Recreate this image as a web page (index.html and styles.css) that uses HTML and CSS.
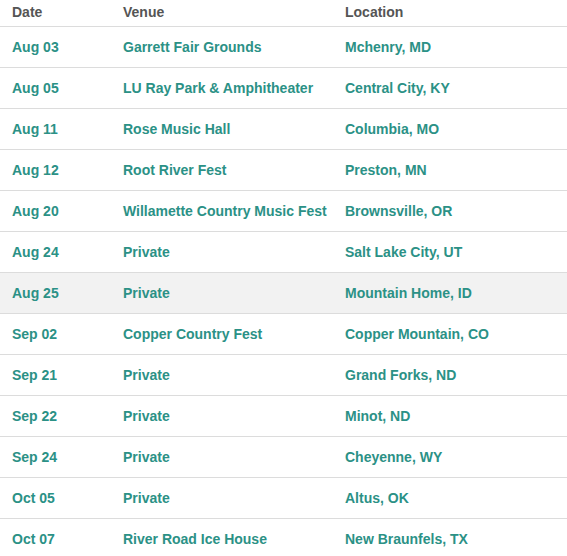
FILE: index.html
```html
<!DOCTYPE html>
<html>
<head>
<meta charset="utf-8">
<link rel="stylesheet" href="styles.css">
</head>
<body>
<table class="tour">
  <thead>
    <tr><th class="c-date">Date</th><th class="c-venue">Venue</th><th class="c-loc">Location</th></tr>
  </thead>
  <tbody>
    <tr><td>Aug 03</td><td>Garrett Fair Grounds</td><td>Mchenry, MD</td></tr>
    <tr><td>Aug 05</td><td>LU Ray Park &amp; Amphitheater</td><td>Central City, KY</td></tr>
    <tr><td>Aug 11</td><td>Rose Music Hall</td><td>Columbia, MO</td></tr>
    <tr><td>Aug 12</td><td>Root River Fest</td><td>Preston, MN</td></tr>
    <tr><td>Aug 20</td><td>Willamette Country Music Fest</td><td>Brownsville, OR</td></tr>
    <tr><td>Aug 24</td><td>Private</td><td>Salt Lake City, UT</td></tr>
    <tr class="hover"><td>Aug 25</td><td>Private</td><td>Mountain Home, ID</td></tr>
    <tr><td>Sep 02</td><td>Copper Country Fest</td><td>Copper Mountain, CO</td></tr>
    <tr><td>Sep 21</td><td>Private</td><td>Grand Forks, ND</td></tr>
    <tr><td>Sep 22</td><td>Private</td><td>Minot, ND</td></tr>
    <tr><td>Sep 24</td><td>Private</td><td>Cheyenne, WY</td></tr>
    <tr><td>Oct 05</td><td>Private</td><td>Altus, OK</td></tr>
    <tr><td>Oct 07</td><td>River Road Ice House</td><td>New Braunfels, TX</td></tr>
  </tbody>
</table>
</body>
</html>
```
FILE: styles.css
```css
html, body {
  margin: 0;
  padding: 0;
  background: #ffffff;
}
body {
  font-family: "Liberation Sans", Arial, sans-serif;
  font-size: 14px;
  font-weight: bold;
}
.tour {
  width: 100%;
  border-collapse: collapse;
  table-layout: fixed;
}
.tour th,
.tour td {
  text-align: left;
  padding: 12px 0 12px 12px;
  line-height: 16px;
  border-bottom: 1px solid #dcdcdc;
  white-space: nowrap;
}
.tour th {
  color: #555555;
  padding-top: 4px;
  padding-bottom: 6px;
}
.tour td {
  color: #2b9186;
}
.c-date { width: 99px; }
.c-venue { width: 210px; }
.tour tr.hover td {
  background: #f2f2f2;
}
```
